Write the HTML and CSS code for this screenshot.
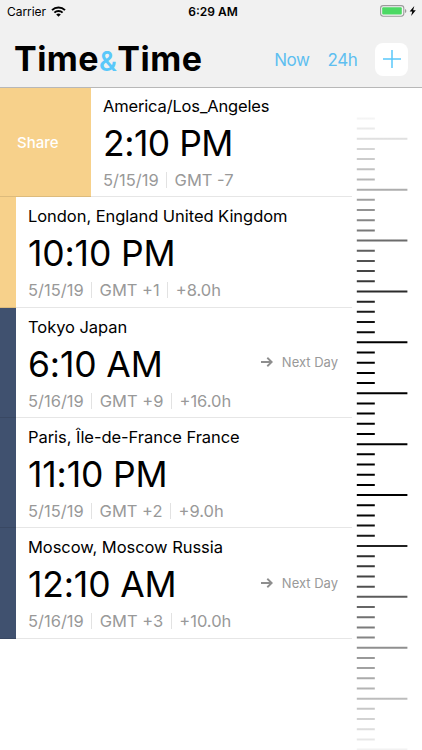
FILE: index.html
```
<!DOCTYPE html>
<html lang="en">
<head>
  <meta charset="UTF-8" />
  <meta name="viewport" content="width=device-width, initial-scale=1.0" />
  <title>Time&amp;Time</title>
  <link rel="stylesheet" href="styles.css">
</head>
<body>
  <header>
    <div class="status">
      <div class="carrier">
        <span>Carrier</span>
        <svg class="wifi" width="15" height="11" viewBox="0 0 15 11">
          <path d="M1 4.1a9.3 9.3 0 0 1 13 0" fill="none" stroke="#000" stroke-width="2"/>
          <path d="M3.4 6.7a5.8 5.8 0 0 1 8.2 0" fill="none" stroke="#000" stroke-width="1.9"/>
          <path d="M5.2 8.5a3.3 3.3 0 0 1 4.6 0L7.5 10.8z"/>
        </svg>
      </div>
      <div class="clock">6:29 AM</div>
      <svg class="battery" width="37" height="12" viewBox="0 0 37 12">
        <rect x="0.6" y="0.6" width="23.2" height="10.6" rx="2.6" fill="#f6f6f6" stroke="#9b9b9b" stroke-width="1.1"/>
        <rect x="2.2" y="2.2" width="19.6" height="7.4" rx="1" fill="#4cd964"/>
        <path d="M25 4.1q1.4.5 1.4 1.9T25 7.9z" fill="#9b9b9b"/>
        <path d="M34.3 1 29.6 6.6h2.7l-1.2 4.4 4.7-5.7h-2.7z"/>
      </svg>
    </div>
    <nav>
      <h1>Time<span class="amp">&amp;</span>Time</h1>
      <a class="link now">Now</a>
      <a class="link">24h</a>
      <button class="add" aria-label="Add">
        <svg width="18" height="18" viewBox="0 0 18 18">
          <path d="M9 0v18M0 9h18" fill="none" stroke="#5ac8fa" stroke-width="1.5"/>
        </svg>
      </button>
    </nav>
  </header>

  <main>
    <ul class="zones">
      <li class="zone day open">
        <div class="side">Share</div>
        <div class="info">
          <div class="place">America/Los_Angeles</div>
          <div class="time">2:10 PM</div>
          <div class="meta"><span>5/15/19</span><span>GMT -7</span></div>
        </div>
      </li>
      <li class="zone day">
        <div class="side"></div>
        <div class="info">
          <div class="place">London, England United Kingdom</div>
          <div class="time">10:10 PM</div>
          <div class="meta"><span>5/15/19</span><span>GMT +1</span><span>+8.0h</span></div>
        </div>
      </li>
      <li class="zone night">
        <div class="side"></div>
        <div class="info">
          <div class="place">Tokyo Japan</div>
          <div class="time">6:10 AM</div>
          <div class="meta"><span>5/16/19</span><span>GMT +9</span><span>+16.0h</span></div>
        </div>
        <div class="next">
          <svg width="12" height="10" viewBox="0 0 12 10"><path d="M0 5h10.5M6.3.8 10.7 5 6.3 9.2" fill="none" stroke="#8e8e8e" stroke-width="1.9"/></svg>
          <span>Next Day</span>
        </div>
      </li>
      <li class="zone night">
        <div class="side"></div>
        <div class="info">
          <div class="place">Paris, Île-de-France France</div>
          <div class="time">11:10 PM</div>
          <div class="meta"><span>5/15/19</span><span>GMT +2</span><span>+9.0h</span></div>
        </div>
      </li>
      <li class="zone night">
        <div class="side"></div>
        <div class="info">
          <div class="place">Moscow, Moscow Russia</div>
          <div class="time">12:10 AM</div>
          <div class="meta"><span>5/16/19</span><span>GMT +3</span><span>+10.0h</span></div>
        </div>
        <div class="next">
          <svg width="12" height="10" viewBox="0 0 12 10"><path d="M0 5h10.5M6.3.8 10.7 5 6.3 9.2" fill="none" stroke="#8e8e8e" stroke-width="1.9"/></svg>
          <span>Next Day</span>
        </div>
      </li>
    </ul>

    <svg class="ruler" width="70" height="662" viewBox="0 88 70 662">
      <defs>
        <linearGradient id="fade" gradientUnits="userSpaceOnUse" x1="0" y1="118" x2="0" y2="750">
          <stop offset="0" stop-color="#000" stop-opacity="0.04"/>
          <stop offset="0.032" stop-color="#000" stop-opacity="0.12"/>
          <stop offset="0.113" stop-color="#000" stop-opacity="0.32"/>
          <stop offset="0.194" stop-color="#000" stop-opacity="0.58"/>
          <stop offset="0.274" stop-color="#000" stop-opacity="0.83"/>
          <stop offset="0.355" stop-color="#000"/>
          <stop offset="0.62" stop-color="#000"/>
          <stop offset="0.677" stop-color="#000" stop-opacity="0.87"/>
          <stop offset="0.758" stop-color="#000" stop-opacity="0.64"/>
          <stop offset="0.838" stop-color="#000" stop-opacity="0.44"/>
          <stop offset="0.919" stop-color="#000" stop-opacity="0.26"/>
          <stop offset="1" stop-color="#000" stop-opacity="0.05"/>
        </linearGradient>
      </defs>
      <path id="ticks" fill="url(#fade)"/>
    </svg>
  </main>

  <script>
    // every fifth tick is a long one
    let d = '';
    for (let i = 0; i < 63; i++) {
      const y = (117.4 + i * 10.18).toFixed(2);
      const w = i % 5 === 2 ? 50.6 : 18;
      d += `M4.8 ${y}h${w}v2h-${w}z`;
    }
    document.getElementById('ticks').setAttribute('d', d);
  </script>
</body>
</html>
```
FILE: styles.css
```
* { margin: 0; padding: 0; box-sizing: border-box; }
body {
  width: 422px;
  height: 750px;
  overflow: hidden;
  background: #fff;
  color: #000;
  font-family: Inter, "Liberation Sans", sans-serif;
}
header {
  height: 88px;
  background: #f1f1f1;
  border-bottom: 1px solid #b8b8b8;
}
.status {
  display: grid;
  grid-template-columns: 1fr auto 1fr;
  align-items: center;
  height: 22px;
  padding: 0 5px 0 7px;
  font-size: 12px;
}
.carrier {
  display: flex;
  align-items: center;
  gap: 5px;
  letter-spacing: -0.05px;
}
.clock {
  font-weight: 600;
  padding-left: 2px;
}
.battery {
  justify-self: end;
}
nav {
  display: flex;
  align-items: center;
  height: 65px;
  padding: 9px 14px 0 14px;
}
h1 {
  flex: 1;
  padding-top: 2px;
  font-size: 34px;
  line-height: 40px;
  font-weight: 700;
  letter-spacing: 0.45px;
}
.amp {
  color: #5ac8fa;
  font-size: 27px;
  font-weight: 600;
}
.link {
  padding-top: 2px;
  color: #5ebff0;
  font-size: 17px;
  letter-spacing: -0.4px;
}
.now {
  margin-right: 18px;
}
.add {
  display: flex;
  align-items: center;
  justify-content: center;
  width: 33px;
  height: 33px;
  margin-left: 17.5px;
  border: none;
  border-radius: 8px;
  background: #fff;
}
main {
  display: flex;
}
.zones {
  width: 352px;
  list-style: none;
}
.zone {
  display: flex;
  height: 110.3px;
  border-bottom: 1px solid #e6e6e6;
}
.side {
  display: flex;
  align-items: center;
  width: 15.5px;
  margin-bottom: -1px;
  border-bottom: 1px solid rgba(0, 0, 0, 0.1);
  color: #fff;
  font-size: 15px;
  font-weight: 500;
}
.open {
  height: 109.4px;
}
.open .side {
  width: 91px;
  padding-left: 17px;
}
.day .side {
  background: #f7d18b;
}
.night .side {
  background: #40516f;
}
.info {
  flex: 1;
  padding: 8px 0 0 12.5px;
  white-space: nowrap;
}
.open .info {
  padding: 7px 0 0 12px;
}
.place {
  font-size: 16.5px;
  line-height: 22px;
  letter-spacing: -0.05px;
}
.time {
  margin-top: 6px;
  font-size: 35.5px;
  line-height: 42px;
  letter-spacing: -0.15px;
}
.open .place {
  letter-spacing: -0.16px;
}
.open .time {
  letter-spacing: -0.5px;
}
.meta {
  display: flex;
  align-items: center;
  margin-top: 4px;
  color: #999;
  font-size: 16.5px;
  line-height: 22px;
}
.meta span + span {
  margin-left: 7.5px;
  padding-left: 7.5px;
  border-left: 1px solid #e2e2e2;
  line-height: 16px;
}
.next {
  display: flex;
  align-items: center;
  gap: 9px;
  margin-right: 14px;
  color: #999;
  font-size: 13px;
}
.ruler {
  flex: none;
}
```
